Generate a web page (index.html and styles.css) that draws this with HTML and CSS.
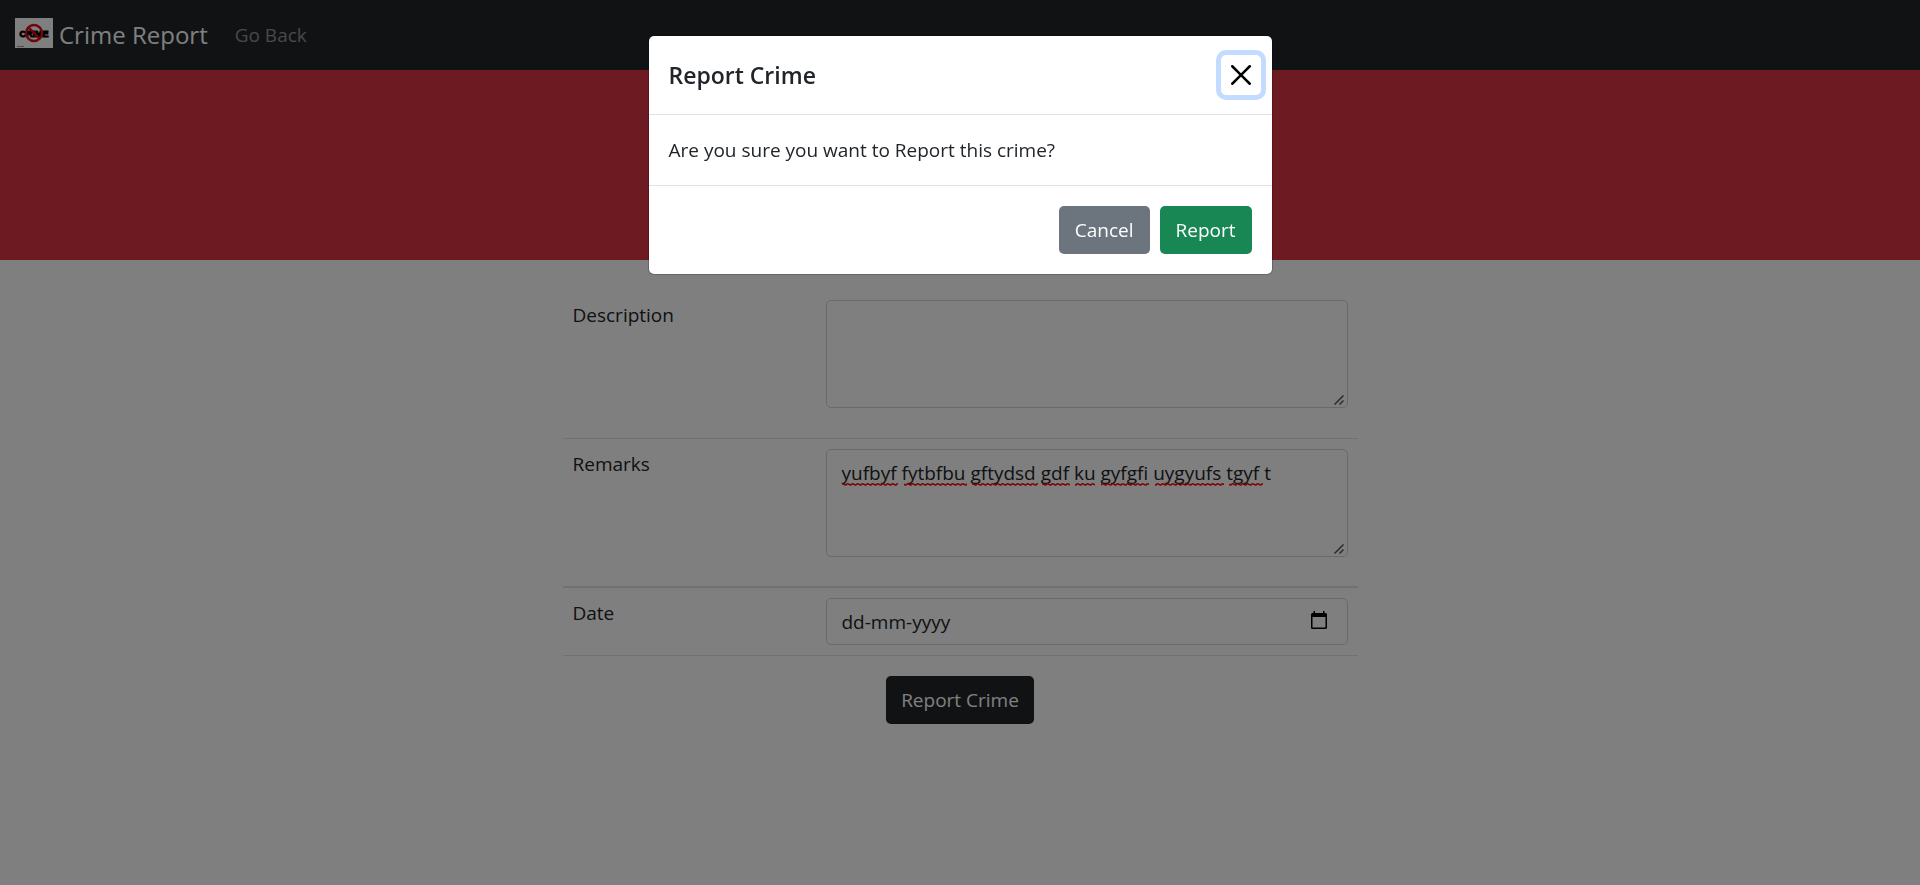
FILE: index.html
```html
<!DOCTYPE html>
<html lang="en">
<head>
<meta charset="utf-8">
<meta name="viewport" content="width=device-width, initial-scale=1">
<title>Crime Report</title>
<link rel="stylesheet" href="styles.css">
</head>
<body>
<nav class="navbar">
  <a class="brand" href="#">
    <svg class="brand-logo" viewBox="0 0 38 30" aria-hidden="true">
      <rect width="38" height="30" fill="#fff"/>
      <text class="logo-word" x="19" y="19" text-anchor="middle">CRIME</text>
      <circle cx="19" cy="15" r="8" fill="none" stroke="#e00a14" stroke-width="2.4"/>
      <path d="M13.4 9.4l11.2 11.2" stroke="#e00a14" stroke-width="2.4"/>
      <path d="M2 28.5h7" stroke="#999" stroke-width="1"/>
    </svg>
    <span>Crime Report</span>
  </a>
  <a class="nav-link" href="#">Go Back</a>
</nav>
<header class="banner"></header>
<main class="container">
  <form class="report-form">
    <div class="form-row">
      <label for="description">Description</label>
      <div class="field field-area">
        <textarea class="control area" id="description" spellcheck="false"></textarea>
        <svg class="grip" viewBox="0 0 10 10" aria-hidden="true"><path d="M.5 9.5l9-9M5.5 9.5l4-4"/></svg>
      </div>
    </div>
    <div class="form-row row-thick">
      <label for="remarks">Remarks</label>
      <div class="field field-area">
        <textarea class="control area" id="remarks" spellcheck="false">yufbyf fytbfbu gftydsd gdf ku gyfgfi uygyufs tgyf t</textarea>
        <svg class="squiggles" aria-hidden="true">
          <defs><pattern id="wave" width="5" height="3" patternUnits="userSpaceOnUse"><path d="M0 .8Q1.25 .8 2.5 1.7T5 .8" fill="none" stroke="#f00" stroke-width="1.5"/></pattern></defs>
          <g fill="url(#wave)">
            <rect x="0" width="56" height="3"/><rect x="62" width="63" height="3"/><rect x="130" width="66" height="3"/><rect x="200" width="28" height="3"/><rect x="233" width="20" height="3"/><rect x="259" width="48" height="3"/><rect x="313" width="69" height="3"/><rect x="387" width="34" height="3"/>
          </g>
        </svg>
        <svg class="grip" viewBox="0 0 10 10" aria-hidden="true"><path d="M.5 9.5l9-9M5.5 9.5l4-4"/></svg>
      </div>
    </div>
    <div class="form-row">
      <label for="date">Date</label>
      <div class="field">
        <input class="control" id="date" type="text" placeholder="dd-mm-yyyy">
        <svg class="calendar" viewBox="0 0 16 18" aria-hidden="true"><path fill-rule="evenodd" d="M2.500 0H4v2h8V0h1.500v2H14.500Q16 2 16 3.500V16.500Q16 18 14.500 18H1.500Q0 18 0 16.500V3.500Q0 2 1.500 2H2.500zM1.500 6v10.500h13V6z"/></svg>
      </div>
    </div>
    <div class="actions"><button class="btn btn-dark" type="button">Report Crime</button></div>
  </form>
</main>
<div class="backdrop">
  <section class="modal" role="dialog" aria-modal="true" aria-labelledby="modal-title">
    <header class="modal-header">
      <h1 class="modal-title" id="modal-title">Report Crime</h1>
      <button class="close" type="button" aria-label="Close"><svg viewBox="0 0 16 16" aria-hidden="true"><path d="M.293.293a1 1 0 011.414 0L8 6.586 14.293.293a1 1 0 111.414 1.414L9.414 8l6.293 6.293a1 1 0 01-1.414 1.414L8 9.414l-6.293 6.293a1 1 0 01-1.414-1.414L6.586 8 .293 1.707a1 1 0 010-1.414z"/></svg></button>
    </header>
    <p class="modal-body">Are you sure you want to Report this crime?</p>
    <footer class="modal-footer">
      <button class="btn btn-secondary" type="button">Cancel</button>
      <button class="btn btn-success" type="button">Report</button>
    </footer>
  </section>
</div>
</body>
</html>
```

FILE: styles.css
```css
* { box-sizing: border-box; }
body {
  margin: 0;
  background: #fff;
  color: #212529;
  font: 19px/30px "Segoe UI", "Open Sans", "Noto Sans", sans-serif;
}
button, input, textarea { font: inherit; color: inherit; }

.navbar {
  display: flex;
  align-items: center;
  gap: 27px;
  height: 70px;
  padding: 0 15px;
  background: #212529;
}
.brand {
  display: flex;
  align-items: center;
  gap: 6px;
  color: #fff;
  font-size: 24px;
  text-decoration: none;
}
.brand-logo { width: 38px; height: 30px; margin-bottom: 4px; }
.logo-word { font: 700 9px "Liberation Sans", sans-serif; stroke: #000; stroke-width: 1; }
.nav-link { color: #909294; text-decoration: none; }
.banner { height: 190px; background: #dc3545; }

.container { max-width: 795px; margin: 0 auto; padding-top: 30px; }
.form-row {
  display: grid;
  grid-template-columns: 233px 1fr;
  gap: 20px;
  padding: 10px;
  border-bottom: 1px solid #dee2e6;
}
.row-thick { padding-bottom: 9px; border-bottom-width: 2px; }
.field { position: relative; }
.field-area { padding-bottom: 20px; }
.control {
  display: block;
  width: 100%;
  height: 47px;
  padding: 8px 15px;
  border: 1px solid #ced4da;
  border-radius: 5px;
  background: #fff;
}
.area { height: 108px; resize: vertical; }
.area::-webkit-resizer { background: transparent; }
.control::placeholder { color: #212529; opacity: 1; }
.grip {
  position: absolute;
  right: 4px;
  bottom: 23px;
  width: 10px;
  height: 10px;
  fill: none;
  stroke: #555;
  stroke-width: 1.5;
  pointer-events: none;
}
.squiggles {
  position: absolute;
  top: 34px;
  left: 16px;
  width: 440px;
  height: 3px;
  pointer-events: none;
}
.calendar { position: absolute; top: 13px; right: 21px; width: 16px; height: 18px; }
.actions { padding: 20px; text-align: center; }

.btn {
  height: 48px;
  padding: 0 15px;
  border: 0;
  border-radius: 5px;
  color: #fff;
}
.btn-dark { background: #212529; }
.btn-secondary { background: #6c757d; }
.btn-success { background: #198754; }

.backdrop { position: fixed; inset: 0; padding: 35px 20px; background: rgba(0, 0, 0, .5); }
.modal {
  max-width: 625px;
  margin: 0 auto;
  border: 1px solid rgba(0, 0, 0, .2);
  border-radius: 6px;
  background: #fff;
  background-clip: padding-box;
}
.modal-header {
  display: flex;
  align-items: center;
  justify-content: space-between;
  padding: 20px;
  border-bottom: 1px solid #dee2e6;
}
.modal-title { margin: 0; font-size: 23px; line-height: 38px; font-weight: 600; }
.close {
  display: grid;
  place-items: center;
  width: 40px;
  height: 40px;
  margin: -10px -9px -10px 0;
  padding: 0;
  border: 0;
  border-radius: 5px;
  background: transparent;
  box-shadow: 0 0 0 5px #c2dbfe;
}
.close svg { width: 20px; height: 20px; }
.modal-body { margin: 0; padding: 20px; }
.modal-footer {
  display: flex;
  justify-content: flex-end;
  gap: 10px;
  padding: 20px;
  border-top: 1px solid #dee2e6;
}
.modal-footer .btn { padding: 0 16px; }
```
